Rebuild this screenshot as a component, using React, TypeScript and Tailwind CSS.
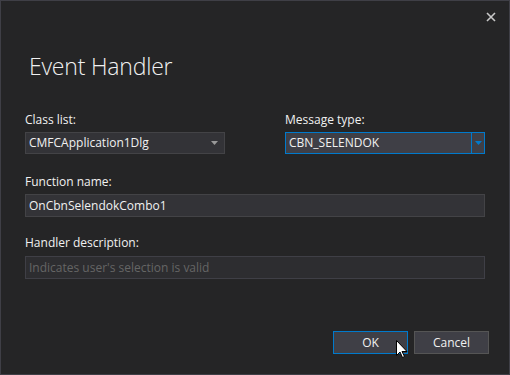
import React from "react";

const Caret = ({ color }: { color: string }) => (
  <svg width="7" height="4" viewBox="0 0 7 4">
    <path d="M0 0 H7 L3.5 4 Z" fill={color} />
  </svg>
);

export default function App() {
  return (
    <div className="relative w-[510px] h-[375px] bg-[#252526] border border-[#3f3f46] flex flex-col font-['Open_Sans',sans-serif] text-[#f1f1f1] overflow-hidden">
      <div className="h-[32px] flex justify-end items-center pr-[13px]">
        <svg width="10" height="10" viewBox="0 0 10 10">
          <path d="M1 1 L9 9 M9 1 L1 9" stroke="#c8c8c8" strokeWidth="1.6" />
        </svg>
      </div>
      <div className="pl-[28px] mt-[16px] text-[23px] font-light leading-[34px] tracking-[-0.2px] text-[#f1f1f1]">
        Event Handler
      </div>
      <div className="px-[24px] mt-[29px] grid grid-cols-[200px_200px] gap-x-[60px]">
        <div className="flex flex-col">
          <div className="text-[12px] leading-[16px] mb-[4px]">Class list:</div>
          <div className="h-[22px] bg-[#333337] border border-[#434346] flex items-center justify-between pl-[3px] pr-[6px] text-[12px]">
            <span>CMFCApplication1Dlg</span>
            <Caret color="#999999" />
          </div>
        </div>
        <div className="flex flex-col">
          <div className="text-[12px] leading-[16px] mb-[4px]">Message type:</div>
          <div className="h-[22px] bg-[#3f3f46] border border-[#007acc] flex items-center text-[12px]">
            <span className="flex-1 pl-[3px]">CBN_SELENDOK</span>
            <div className="w-[13px] h-full border-l border-[#007acc] flex items-center justify-center">
              <Caret color="#007acc" />
            </div>
          </div>
        </div>
      </div>
      <div className="px-[24px] mt-[20px] flex flex-col">
        <div className="text-[12px] leading-[16px] mb-[4px]">Function name:</div>
        <div className="w-[460px] h-[23px] bg-[#333337] border border-[#434346] flex items-center pl-[3px] text-[12px]">
          OnCbnSelendokCombo1
        </div>
      </div>
      <div className="px-[24px] mt-[18px] flex flex-col">
        <div className="text-[12px] leading-[16px] mb-[5px]">Handler description:</div>
        <div className="w-[460px] h-[23px] bg-[#2d2d30] border border-[#3f3f46] flex items-center pl-[3px] text-[12px] text-[#656565]">
          Indicates user's selection is valid
        </div>
      </div>
      <div className="mt-auto mb-[20px] flex justify-end gap-[6px] pr-[20px]">
        <div className="w-[75px] h-[23px] bg-[#3f3f46] border border-[#007acc] flex items-center justify-center text-[12px]">
          OK
        </div>
        <div className="w-[75px] h-[23px] bg-[#3f3f46] border border-[#555555] flex items-center justify-center text-[12px]">
          Cancel
        </div>
      </div>
      <svg className="absolute left-[395px] top-[339px]" width="12" height="19" viewBox="0 0 12 19">
        <path d="M0.5 0.5 L0.5 15.5 L4 12 L6.5 17.5 L8.5 16.5 L6 11.5 L11 11.5 Z" fill="#ffffff" stroke="#000000" strokeWidth="1" />
      </svg>
    </div>
  );
}
